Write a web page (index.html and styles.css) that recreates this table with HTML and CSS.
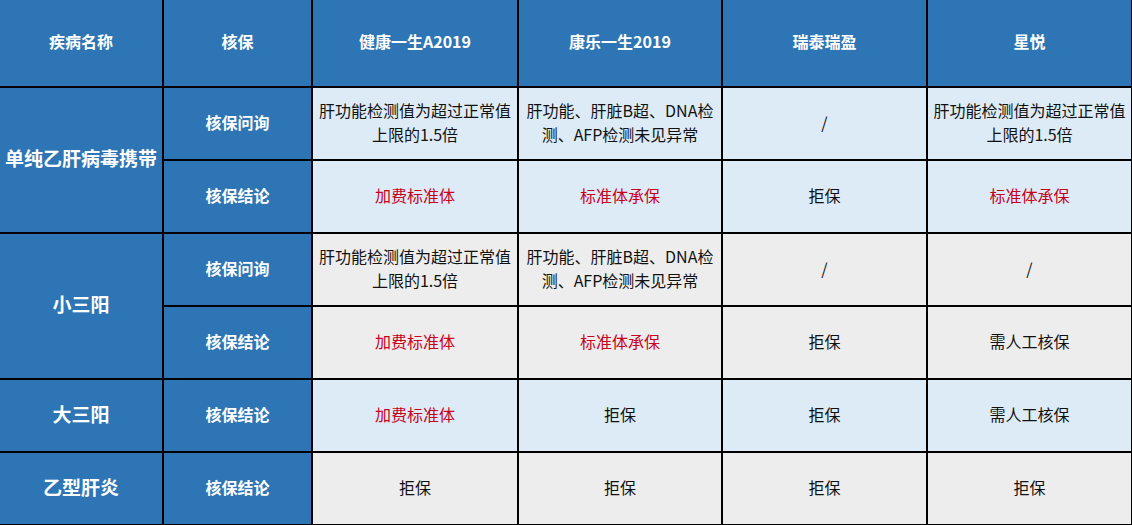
FILE: index.html
```html
<!DOCTYPE html>
<html lang="zh-CN">
<head>
<meta charset="utf-8">
<title>核保对比</title>
<link rel="stylesheet" href="styles.css">
</head>
<body>
<div class="sheet">
  <div class="cell head">疾病名称</div>
  <div class="cell head">核保</div>
  <div class="cell head">健康一生A2019</div>
  <div class="cell head">康乐一生2019</div>
  <div class="cell head">瑞泰瑞盈</div>
  <div class="cell head">星悦</div>

  <div class="cell disease span2">单纯乙肝病毒携带</div>
  <div class="cell head">核保问询</div>
  <div class="cell blue">肝功能检测值为超过正常值上限的1.5倍</div>
  <div class="cell blue">肝功能、肝脏B超、DNA检测、AFP检测未见异常</div>
  <div class="cell blue">/</div>
  <div class="cell blue">肝功能检测值为超过正常值上限的1.5倍</div>

  <div class="cell head">核保结论</div>
  <div class="cell blue red">加费标准体</div>
  <div class="cell blue red">标准体承保</div>
  <div class="cell blue">拒保</div>
  <div class="cell blue red">标准体承保</div>

  <div class="cell disease span2">小三阳</div>
  <div class="cell head">核保问询</div>
  <div class="cell gray">肝功能检测值为超过正常值上限的1.5倍</div>
  <div class="cell gray">肝功能、肝脏B超、DNA检测、AFP检测未见异常</div>
  <div class="cell gray">/</div>
  <div class="cell gray">/</div>

  <div class="cell head">核保结论</div>
  <div class="cell gray red">加费标准体</div>
  <div class="cell gray red">标准体承保</div>
  <div class="cell gray">拒保</div>
  <div class="cell gray">需人工核保</div>

  <div class="cell disease">大三阳</div>
  <div class="cell head">核保结论</div>
  <div class="cell blue red">加费标准体</div>
  <div class="cell blue">拒保</div>
  <div class="cell blue">拒保</div>
  <div class="cell blue">需人工核保</div>

  <div class="cell disease">乙型肝炎</div>
  <div class="cell head">核保结论</div>
  <div class="cell gray">拒保</div>
  <div class="cell gray">拒保</div>
  <div class="cell gray">拒保</div>
  <div class="cell gray">拒保</div>
</div>
</body>
</html>
```

FILE: styles.css
```css
html, body {
  margin: 0;
  padding: 0;
  background: #ffffff;
}

.sheet {
  display: grid;
  grid-template-columns: 162px 147px 204px 202px 203px 203px;
  grid-template-rows: 86px repeat(6, 71px);
  gap: 2px;
  background: #000000;
  width: 1131px;
  border-right: 1px solid #000000;
  border-bottom: 1px solid #000000;
  font-family: "Noto Sans CJK SC", "Noto Sans", sans-serif;
}

.cell {
  display: flex;
  align-items: center;
  justify-content: center;
  text-align: center;
  font-size: 16px;
  line-height: 24px;
  color: #111111;
  padding: 0 4px 4px;
  box-sizing: border-box;
}

.head {
  background: #2e75b6;
  color: #ffffff;
  font-weight: 700;
}

.disease {
  background: #2e75b6;
  color: #ffffff;
  font-weight: 700;
  font-size: 19px;
  padding: 0 0 4px;
}

.span2 {
  grid-row: span 2;
}

.blue {
  background: #ddebf7;
}

.gray {
  background: #ededed;
}

.red {
  color: #c8001e;
}
```
